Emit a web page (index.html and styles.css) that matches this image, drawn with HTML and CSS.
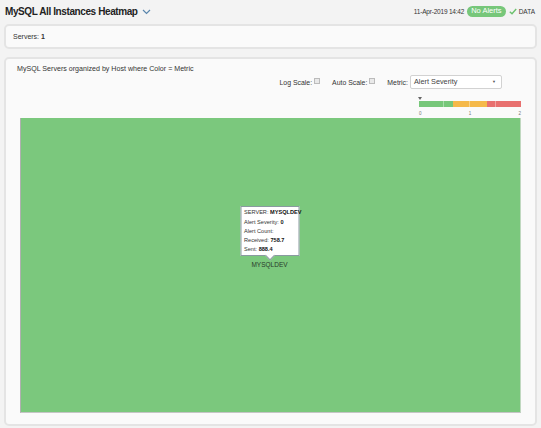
FILE: index.html
```html
<!DOCTYPE html>
<html>
<head>
<meta charset="utf-8">
<link rel="stylesheet" href="styles.css">
</head>
<body>
<div class="topbar">
  <div class="title">MySQL All Instances Heatmap <svg class="chev" width="9" height="6" viewBox="0 0 9 6"><path d="M1 1 L4.5 4.5 L8 1" fill="none" stroke="#5a86ad" stroke-width="1.2"/></svg></div>
  <div class="status">
    <span class="ts">11-Apr-2019 14:42</span>
    <span class="badge">No Alerts</span>
    <svg class="check" width="8" height="7" viewBox="0 0 8 7"><path d="M0.8 3.8 L3 5.8 L7.2 1" fill="none" stroke="#6cc16e" stroke-width="1.4"/></svg>
    <span class="data">DATA</span>
  </div>
</div>
<div class="panel servers">Servers: <b>1</b></div>
<div class="panel main">
  <div class="main-title">MySQL Servers organized by Host where Color = Metric</div>
  <div class="controls">
    <span class="ctl">Log Scale: <span class="cb"></span></span>
    <span class="ctl">Auto Scale: <span class="cb"></span></span>
    <span class="ctl">Metric:</span>
    <span class="select">Alert Severity<span class="arrow">&#9660;</span></span>
  </div>
  <div class="legend">
    <div class="marker"></div>
    <div class="bar">
      <span class="g"></span><span class="g"></span><span class="o"></span><span class="o"></span><span class="r"></span><span class="r2"></span>
    </div>
    <div class="ticks"><span>0</span><span>1</span><span>2</span></div>
  </div>
  <div class="heatmap">
    <div class="node">
      <div class="tooltip">
        <div>SERVER: <b>MYSQLDEV</b></div>
        <div>Alert Severity: <b>0</b></div>
        <div>Alert Count: </div>
        <div>Received: <b>758.7</b></div>
        <div>Sent: <b>888.4</b></div>
      </div>
      <span class="label">MYSQLDEV</span>
    </div>
  </div>
</div>
</body>
</html>
```
FILE: styles.css
```css
html, body { margin: 0; padding: 0; }
body {
  width: 541px;
  height: 428px;
  background: #f3f3f3;
  font-family: "Liberation Sans", Arial, sans-serif;
  color: #333;
  overflow: hidden;
}
.topbar {
  height: 24px;
  display: flex;
  align-items: center;
  justify-content: space-between;
  padding: 0 6px 0 5px;
}
.title {
  font-size: 10px;
  letter-spacing: -0.4px;
  font-weight: bold;
  color: #222;
  display: flex;
  align-items: center;
  gap: 3px;
  margin-top: -1px;
}
.chev { margin-left: 1px; margin-top: 1px; }
.status {
  display: flex;
  align-items: center;
  font-size: 6.5px;
  color: #333;
  margin-top: -2px;
}
.ts { letter-spacing: -0.2px; }
.badge {
  background: #77c77a;
  color: #fff;
  font-size: 7.5px;
  border-radius: 6px;
  padding: 1.5px 4px;
  margin-left: 3px;
  line-height: 8px;
}
.check { margin-left: 3px; }
.data { margin-left: 2px; }
.panel {
  margin: 0 4px;
  background: #fafafa;
  border: 2px solid #e4e4e4;
  border-radius: 5px;
  box-sizing: border-box;
}
.servers {
  height: 25px;
  font-size: 7px;
  display: flex;
  align-items: center;
  padding-left: 7px;
  gap: 2px;
}
.servers b { font-weight: bold; }
.main {
  margin-top: 8px;
  height: 369px;
  padding: 6px 14px 0 14px;
  display: flex;
  flex-direction: column;
}
.main-title {
  font-size: 7.1px;
  color: #333;
  margin-left: -3px;
  height: 9px;
  line-height: 9px;
}
.controls {
  display: flex;
  justify-content: flex-end;
  align-items: center;
  margin-top: 1px;
  padding-right: 19px;
  font-size: 6.9px;
  color: #333;
}
.ctl { display: flex; align-items: center; margin-left: 12px; }
.ctl:first-child { margin-left: 0; }
.cb {
  display: inline-block;
  width: 4px;
  height: 4px;
  border: 1px solid #bbb;
  background: #e9e9e9;
  margin-left: 2px;
  margin-top: -3px;
}
.select {
  position: relative;
  width: 92px;
  height: 14px;
  box-sizing: border-box;
  border: 1px solid #d2d2d2;
  border-radius: 2px;
  background: #fff;
  margin-left: 2px;
  font-size: 7.3px;
  line-height: 12px;
  padding-left: 3px;
  color: #444;
}
.arrow {
  position: absolute;
  right: 5px;
  top: 0;
  font-size: 4px;
  color: #555;
}
.legend {
  align-self: flex-end;
  width: 102px;
  margin-right: 0;
  margin-top: 8px;
}
.marker {
  width: 0; height: 0;
  border-left: 2px solid transparent;
  border-right: 2px solid transparent;
  border-top: 3px solid #666;
  margin-left: -1px;
}
.bar {
  display: flex;
  height: 6px;
  margin-top: 1px;
}
.bar span { height: 100%; }
.bar .g { background: #77c77a; }
.bar .g:first-child { width: 24px; border-right: 1px solid #a8dca9; }
.bar .g:nth-child(2) { width: 9px; }
.bar .o { background: #f5b94a; }
.bar .o:nth-child(3) { width: 16px; border-right: 1px solid #f8d38a; }
.bar .o:nth-child(4) { width: 17px; }
.bar .r { background: #e8706f; width: 8px; border-right: 1px solid #f0a3a2; }
.bar .r2 { background: #e8706f; flex: 1; }
.ticks {
  display: flex;
  justify-content: space-between;
  font-size: 4.5px;
  color: #777;
  margin-top: 4px;
  height: 6px;
}
.heatmap {
  margin-top: 1px;
  height: 295px;
  background: #7bc87d;
  border-left: 1px solid #b0b0b0;
  border-bottom: 1px solid #c5c5c5;
  border-right: 1px solid #c0d8c0;
  box-sizing: border-box;
  display: flex;
  align-items: center;
  justify-content: center;
}
.node {
  position: relative;
  display: flex;
  justify-content: center;
  margin-left: -2px;
  margin-top: -2px;
}
.label {
  font-size: 6.5px;
  color: #2a3a2a;
}
.tooltip {
  position: absolute;
  bottom: 12px;
  left: 50%;
  transform: translateX(-50%);
  width: 59px;
  box-sizing: border-box;
  background: #fff;
  border: 1px solid #8a9aa0;
  padding: 1px 3px 0 3px;
  font-size: 5.6px;
  line-height: 9.2px;
  color: #333;
  white-space: nowrap;
}
.tooltip b { color: #111; }
.tooltip::after {
  content: "";
  position: absolute;
  left: 50%;
  bottom: -4px;
  margin-left: -3px;
  width: 6px;
  height: 6px;
  background: #fff;
  border-right: 1px solid #8a9aa0;
  border-bottom: 1px solid #8a9aa0;
  transform: rotate(45deg);
}
```
